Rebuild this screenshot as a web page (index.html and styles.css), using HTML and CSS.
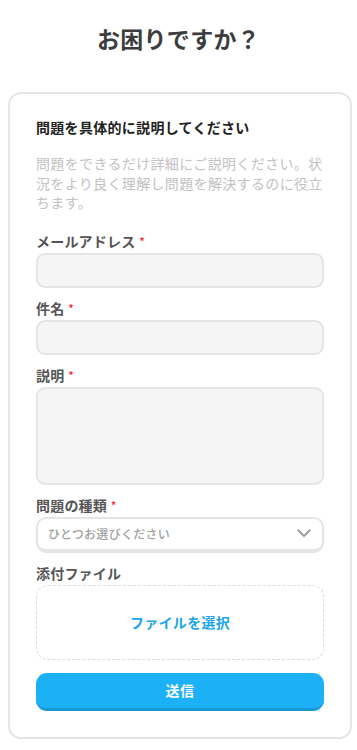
FILE: index.html
```html
<!DOCTYPE html>
<html lang="ja">
<head>
<meta charset="utf-8">
<meta name="viewport" content="width=device-width, initial-scale=1">
<title>お困りですか？</title>
<link rel="stylesheet" href="styles.css">
</head>
<body>
<h1 class="title">お困りですか？</h1>
<form class="card">
  <h2 class="card-heading">問題を具体的に説明してください</h2>
  <p class="card-desc">問題をできるだけ詳細にご説明ください。状況をより良く理解し問題を解決するのに役立ちます。</p>

  <div class="field">
    <label class="label">メールアドレス<span class="req">*</span></label>
    <div class="input"></div>
  </div>
  <div class="field">
    <label class="label">件名<span class="req">*</span></label>
    <div class="input"></div>
  </div>
  <div class="field">
    <label class="label">説明<span class="req">*</span></label>
    <div class="input textarea"></div>
  </div>
  <div class="field">
    <label class="label">問題の種類<span class="req">*</span></label>
    <div class="select">
      <span class="select-text">ひとつお選びください</span>
      <svg class="chevron" width="14" height="9" viewBox="0 0 14 9"><path d="M1.5 1.5 L7 7 L12.5 1.5" fill="none" stroke="#a0a0a0" stroke-width="2.2" stroke-linecap="round" stroke-linejoin="round"/></svg>
    </div>
  </div>
  <div class="field">
    <label class="label">添付ファイル</label>
    <div class="dropzone"><span class="dropzone-text">ファイルを選択</span></div>
  </div>
  <button type="button" class="submit">送信</button>
</form>
</body>
</html>
```

FILE: styles.css
```css
* { box-sizing: border-box; }
html, body { margin: 0; padding: 0; background: #fff; }
body {
  font-family: "Noto Sans CJK JP", "Noto Sans", sans-serif;
  color: #4b4b4b;
  width: 357px;
}
.title {
  margin: 0;
  padding-top: 23px;
  height: 92px;
  text-align: center;
  font-size: 23px;
  line-height: 30px;
  font-weight: 700;
  color: #3c3c3c;
  letter-spacing: 0.3px;
}
.card {
  margin: 0 0 0 8px;
  width: 344px;
  border: 2px solid #e5e5e5;
  border-radius: 13px;
  padding: 23px 26px 26px;
  display: flex;
  flex-direction: column;
}
.card-heading {
  margin: 0;
  font-size: 14px;
  line-height: 20px;
  font-weight: 700;
  color: #222;
  letter-spacing: 0.3px;
}
.card-desc {
  margin: 17px 0 0;
  font-size: 14px;
  line-height: 19.5px;
  color: #c2c2c2;
  letter-spacing: 0.35px;
}
.field {
  display: flex;
  flex-direction: column;
  margin-top: 10px;
}
.card-desc + .field { margin-top: 18px; }
.label {
  display: flex;
  align-items: center;
  height: 20px;
  font-size: 14px;
  line-height: 20px;
  font-weight: 700;
  color: #555;
  margin-bottom: 2px;
  letter-spacing: 0.2px;
}
.req {
  color: #ff2b2b;
  font-size: 10px;
  line-height: 10px;
  height: 10px;
  margin-left: 4px;
}
.input {
  height: 35px;
  background: #f5f5f5;
  border: 2px solid #e5e5e5;
  border-radius: 9px;
}
.textarea { height: 98px; }
.select {
  height: 36px;
  background: #fff;
  border: 2px solid #e5e5e5;
  border-bottom-width: 4px;
  border-radius: 10px;
  display: flex;
  align-items: center;
  justify-content: space-between;
  padding: 0 11px 0 10px;
}
.select-text {
  font-size: 12px;
  color: #a0a0a0;
  font-weight: 500;
  letter-spacing: 0.3px;
}
.chevron { display: block; }
.dropzone {
  height: 75px;
  border: 1.5px dashed #dcdcdc;
  border-radius: 12px;
  display: flex;
  align-items: center;
  justify-content: center;
}
.dropzone-text {
  font-size: 14px;
  font-weight: 700;
  color: #1ca5ea;
  letter-spacing: 0.3px;
}
.submit {
  margin-top: 13px;
  height: 38px;
  border: 0;
  border-bottom: 3px solid #1899d6;
  border-radius: 11px;
  background: #1cb0f6;
  color: #fff;
  font-family: inherit;
  font-size: 14px;
  font-weight: 700;
  letter-spacing: 0.5px;
  padding: 0;
}
```
